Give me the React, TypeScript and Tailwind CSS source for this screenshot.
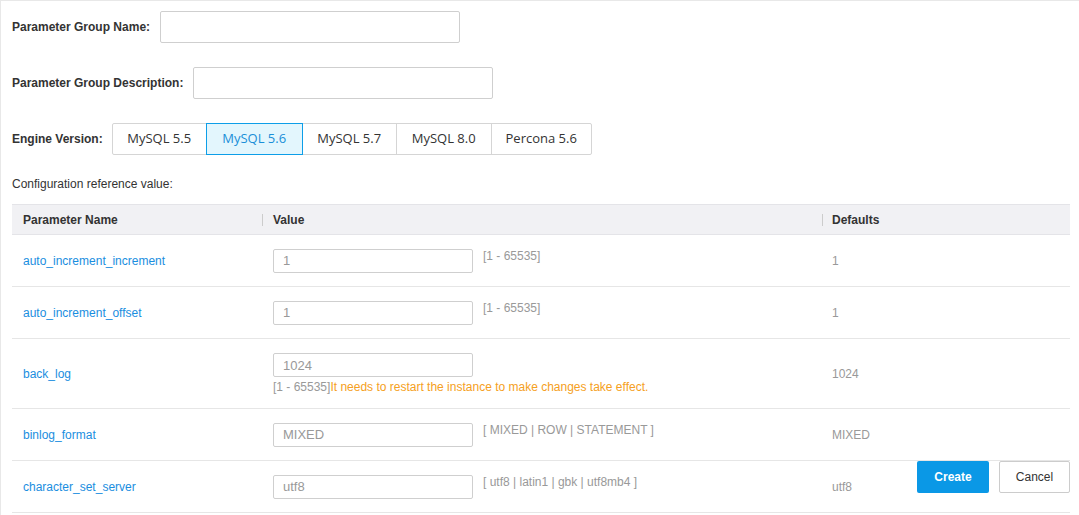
import React from 'react';

const versions = ['MySQL 5.5', 'MySQL 5.6', 'MySQL 5.7', 'MySQL 8.0', 'Percona 5.6'];
const widths = ['w-[95px]', '-ml-px w-[97px]', 'w-[94px]', '-ml-px w-[96px]', '-ml-px w-[101px]'];

const params = [
  { name: 'auto_increment_increment', value: '1', range: '[1 - 65535]', def: '1' },
  { name: 'auto_increment_offset', value: '1', range: '[1 - 65535]', def: '1' },
  { name: 'back_log', value: '1024', range: '[1 - 65535]', note: 'It needs to restart the instance to make changes take effect.', def: '1024' },
  { name: 'binlog_format', value: 'MIXED', range: '[ MIXED | ROW | STATEMENT ]', def: 'MIXED' },
  { name: 'character_set_server', value: 'utf8', range: '[ utf8 | latin1 | gbk | utf8mb4 ]', def: 'utf8' },
];

export default function App() {
  return (
    <div
      className="relative h-[515px] w-full overflow-hidden border-t border-l border-[#e8e8e8] bg-white text-[12px] text-[#333]"
      style={{ fontFamily: '"Liberation Sans", Arial, sans-serif' }}
    >
      <div className="pl-[11px] pt-[10px] pr-[9px]">
        {/* Form fields */}
        <div className="flex items-center gap-[10px]">
          <label className="font-bold">Parameter Group Name:</label>
          <input className="h-[32px] w-[300px] rounded-[2px] border border-[#cfcfcf] outline-none" />
        </div>
        <div className="mt-[24px] flex items-center gap-[10px]">
          <label className="font-bold">Parameter Group Description:</label>
          <input className="h-[32px] w-[300px] rounded-[2px] border border-[#cfcfcf] outline-none" />
        </div>
        <div className="mt-[24px] flex items-center gap-[9px]">
          <label className="font-bold">Engine Version:</label>
          <div className="flex h-[32px]" style={{ fontFamily: '"Open Sans", "Noto Sans", sans-serif' }}>
            {versions.map((v, i) =>
              i === 1 ? (
                <div
                  key={v}
                  className={`relative flex items-center justify-center border border-[#0d9ee8] bg-[#e3f6fd] text-[13px] text-[#1a8fd8] ${widths[i]}`}
                >
                  {v}
                </div>
              ) : (
                <div
                  key={v}
                  className={`flex items-center justify-center border border-[#d5d5d5] text-[13px] text-[#333] ${widths[i]} ${i === 0 ? 'rounded-l-[2px]' : ''} ${i === 4 ? 'rounded-r-[2px]' : ''} ${i === 2 ? 'border-l-0' : ''}`}
                >
                  {v}
                </div>
              )
            )}
          </div>
        </div>
        <div className="mt-[22px] leading-[14px]">Configuration reference value:</div>

        {/* Table */}
        <div className="mt-[13px] w-[1058px]">
          <div className="flex h-[31px] items-center border-t border-b border-[#e4e4e8] bg-[#f1f1f4] font-bold">
            <div className="w-[250px] pl-[11px]">Parameter Name</div>
            <div className="flex w-[560px] items-center">
              <span className="h-[12px] w-px bg-[#cccccc]" />
              <span className="pl-[10px]">Value</span>
            </div>
            <div className="flex flex-1 items-center">
              <span className="h-[12px] w-px bg-[#cccccc]" />
              <span className="pl-[9px]">Defaults</span>
            </div>
          </div>
          {params.map((p) => (
            <div key={p.name} className={`flex border-b border-[#e6e6e6] ${p.note ? 'h-[70px]' : 'h-[52px]'}`}>
              <div className="flex w-[250px] items-center pl-[11px] text-[#1a8ee0]">{p.name}</div>
              <div className="flex w-[560px] flex-col justify-center pl-[11px]">
                <div className="flex items-start gap-[10px]">
                  <input
                    readOnly
                    value={p.value}
                    className="h-[24px] w-[200px] rounded-[2px] border border-[#cfcfcf] px-[9px] text-[13px] text-[#999] outline-none"
                  />
                  {!p.note && <span className="text-[#999] leading-[14px]">{p.range}</span>}
                </div>
                {p.note && (
                  <div className="mt-[3px] leading-[14px]">
                    <span className="text-[#999]">{p.range}</span>
                    <span className="text-[#f5a022]">{p.note}</span>
                  </div>
                )}
              </div>
              <div className="flex flex-1 items-center pl-[10px] text-[#999]">{p.def}</div>
            </div>
          ))}
        </div>
      </div>

      {/* Footer actions */}
      <div className="absolute right-[9px] top-[460px] flex gap-[10px]">
        <button className="h-[32px] w-[72px] rounded-[2px] bg-[#0a98e6] font-bold text-white">Create</button>
        <button className="h-[32px] w-[71px] rounded-[2px] border border-[#cccccc] bg-white text-[#333]">Cancel</button>
      </div>
    </div>
  );
}
